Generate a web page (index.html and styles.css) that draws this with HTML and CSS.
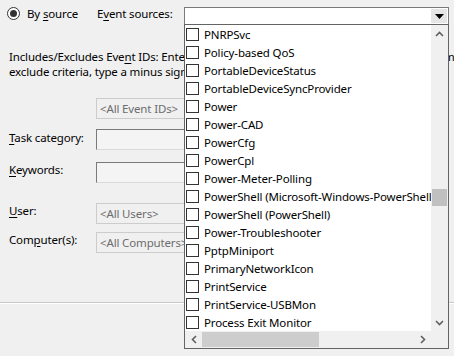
FILE: index.html
```html
<!DOCTYPE html>
<html lang="en">
<head>
  <meta charset="UTF-8" />
  <title>Filter by source</title>
  <link rel="stylesheet" href="styles.css">
</head>
<body>
  <div class="dialog">
    <div class="source-row">
      <span class="radio"><span class="dot"></span></span>
      <span class="radio-label">By <u>s</u>ource</span>
      <span class="src-label">E<u>v</u>ent sources:</span>
      <div class="combo">
        <span class="combo-btn">
          <svg width="9" height="5" viewBox="0 0 9 5"><polygon points="0,0 9,0 4.5,5" fill="#000"/></svg>
        </span>
      </div>
    </div>

    <p class="desc">Includes/Excludes Eve<u>n</u>t IDs: Enter ID numbers and/or ID ranges separated by commas. To<br>exclude criteria, type a minus sign first. For example 1,3,5-99,-76</p>

    <div class="ids-row"><div class="field disabled">&lt;All Event IDs&gt;</div></div>

    <div class="form-row task">
      <label><u>T</u>ask category:</label>
      <div class="field enabled"></div>
    </div>
    <div class="form-row keywords">
      <label><u>K</u>eywords:</label>
      <div class="field enabled"></div>
    </div>
    <div class="form-row user">
      <label><u>U</u>ser:</label>
      <div class="field disabled">&lt;All Users&gt;</div>
    </div>
    <div class="form-row computer">
      <label>Com<u>p</u>uter(s):</label>
      <div class="field disabled">&lt;All Computers&gt;</div>
    </div>

    <div class="sep"></div>
  </div>

  <div class="dropdown">
    <div class="list-area">
      <ul class="items">
        <li><span class="box"></span>PNRPSvc</li>
        <li><span class="box"></span>Policy-based QoS</li>
        <li><span class="box"></span>PortableDeviceStatus</li>
        <li><span class="box"></span>PortableDeviceSyncProvider</li>
        <li><span class="box"></span>Power</li>
        <li><span class="box"></span>Power-CAD</li>
        <li><span class="box"></span>PowerCfg</li>
        <li><span class="box"></span>PowerCpl</li>
        <li><span class="box"></span>Power-Meter-Polling</li>
        <li><span class="box"></span>PowerShell (Microsoft-Windows-PowerShell)</li>
        <li><span class="box"></span>PowerShell (PowerShell)</li>
        <li><span class="box"></span>Power-Troubleshooter</li>
        <li><span class="box"></span>PptpMiniport</li>
        <li><span class="box"></span>PrimaryNetworkIcon</li>
        <li><span class="box"></span>PrintService</li>
        <li><span class="box"></span>PrintService-USBMon</li>
        <li><span class="box"></span>Process Exit Monitor</li>
      </ul>
      <div class="vscroll">
        <span class="arrow"><svg width="9" height="6" viewBox="0 0 9 6"><polyline points="1,5 4.5,1.5 8,5" fill="none" stroke="#606060" stroke-width="1.6"/></svg></span>
        <div class="vtrack"><div class="vthumb"></div></div>
        <span class="arrow"><svg width="9" height="6" viewBox="0 0 9 6"><polyline points="1,1 4.5,4.5 8,1" fill="none" stroke="#606060" stroke-width="1.6"/></svg></span>
      </div>
    </div>
    <div class="hscroll">
      <span class="arrow"><svg width="6" height="9" viewBox="0 0 6 9"><polyline points="5,1 1.5,4.5 5,8" fill="none" stroke="#606060" stroke-width="1.6"/></svg></span>
      <div class="htrack"><div class="hthumb"></div></div>
      <span class="arrow"><svg width="6" height="9" viewBox="0 0 6 9"><polyline points="1,1 4.5,4.5 1,8" fill="none" stroke="#606060" stroke-width="1.6"/></svg></span>
      <span class="corner"></span>
    </div>
  </div>
</body>
</html>
```

FILE: styles.css
```css
body { margin: 0; background: #f0f0f0; color: #000; font-family: "Noto Sans", "Open Sans", sans-serif; font-size: 11.5px; letter-spacing: -0.15px; overflow: hidden; width: 454px; height: 356px; position: relative; }
u { text-decoration: underline; text-underline-offset: 2px; }

.dialog { width: 480px; }
.source-row { display: flex; align-items: flex-start; height: 25px; padding-top: 7px; box-sizing: border-box; }
.radio { width: 13px; height: 13px; margin-left: 7px; border: 1px solid #333; border-radius: 50%; box-sizing: border-box; background: #fff; display: flex; align-items: center; justify-content: center; }
.radio .dot { width: 7px; height: 7px; border-radius: 50%; background: #333; }
.radio-label { width: 70px; margin-left: 7px; line-height: 13px; }
.src-label { width: 87px; line-height: 14px; }
.combo { width: 265px; height: 18px; border: 1px solid #7a7a7a; background: #fff; box-sizing: border-box; display: flex; justify-content: flex-end; padding: 1px; }
.combo-btn { width: 16px; height: 14px; background: #e5e5e5; display: flex; align-items: center; justify-content: center; }

.desc { margin: 24px 0 0 9px; line-height: 15px; white-space: nowrap; }

.field { height: 21px; box-sizing: border-box; width: 350px; line-height: 19px; padding-left: 3px; white-space: nowrap; overflow: hidden; }
.field.disabled { border: 1px solid #cccccc; background: #f0f0f0; color: #6d6d6d; }
.field.enabled { border: 1px solid #dadada; border-top-color: #7a7a7a; border-left-color: #7a7a7a; background: #f4f4f4; }
.ids-row { margin: 19px 0 0 96px; }

.form-row { display: flex; align-items: flex-start; }
.form-row label { width: 87px; padding-left: 9px; line-height: 16px; }
.task { margin-top: 10px; }
.task label { padding-top: 1px; }
.keywords { margin-top: 12px; }
.user { margin-top: 20px; }
.computer { margin-top: 8px; }

.sep { margin-top: 49px; height: 1px; background: #c8c8c8; border-bottom: 1px solid #fff; }

.dropdown { position: absolute; left: 184px; top: 24px; width: 265px; height: 325px; box-sizing: border-box; border: 1px solid #646464; background: #fff; display: flex; flex-direction: column; }
.list-area { display: flex; height: 306px; flex: none; }
.items { list-style: none; margin: 0; padding: 0; flex: 1; min-width: 0; overflow: hidden; }
.items li { height: 18px; display: flex; align-items: center; white-space: nowrap; padding-left: 1px; }
.box { flex: none; width: 13px; height: 13px; border: 1px solid #333; box-sizing: border-box; background: #fff; margin-right: 5px; }

.vscroll { width: 17px; background: #f0f0f0; display: flex; flex-direction: column; }
.arrow { flex: none; width: 17px; height: 17px; display: flex; align-items: center; justify-content: center; }
.vtrack { flex: 1; }
.vthumb { margin: 147px 1px 0; height: 17px; background: #c0c0c0; }

.hscroll { flex: none; height: 17px; display: flex; background: #f0f0f0; }
.htrack { flex: 1; display: flex; align-items: stretch; padding: 1px 0; }
.hthumb { width: 117px; background: #cdcdcd; }
.corner { width: 17px; background: #f0f0f0; }
```
